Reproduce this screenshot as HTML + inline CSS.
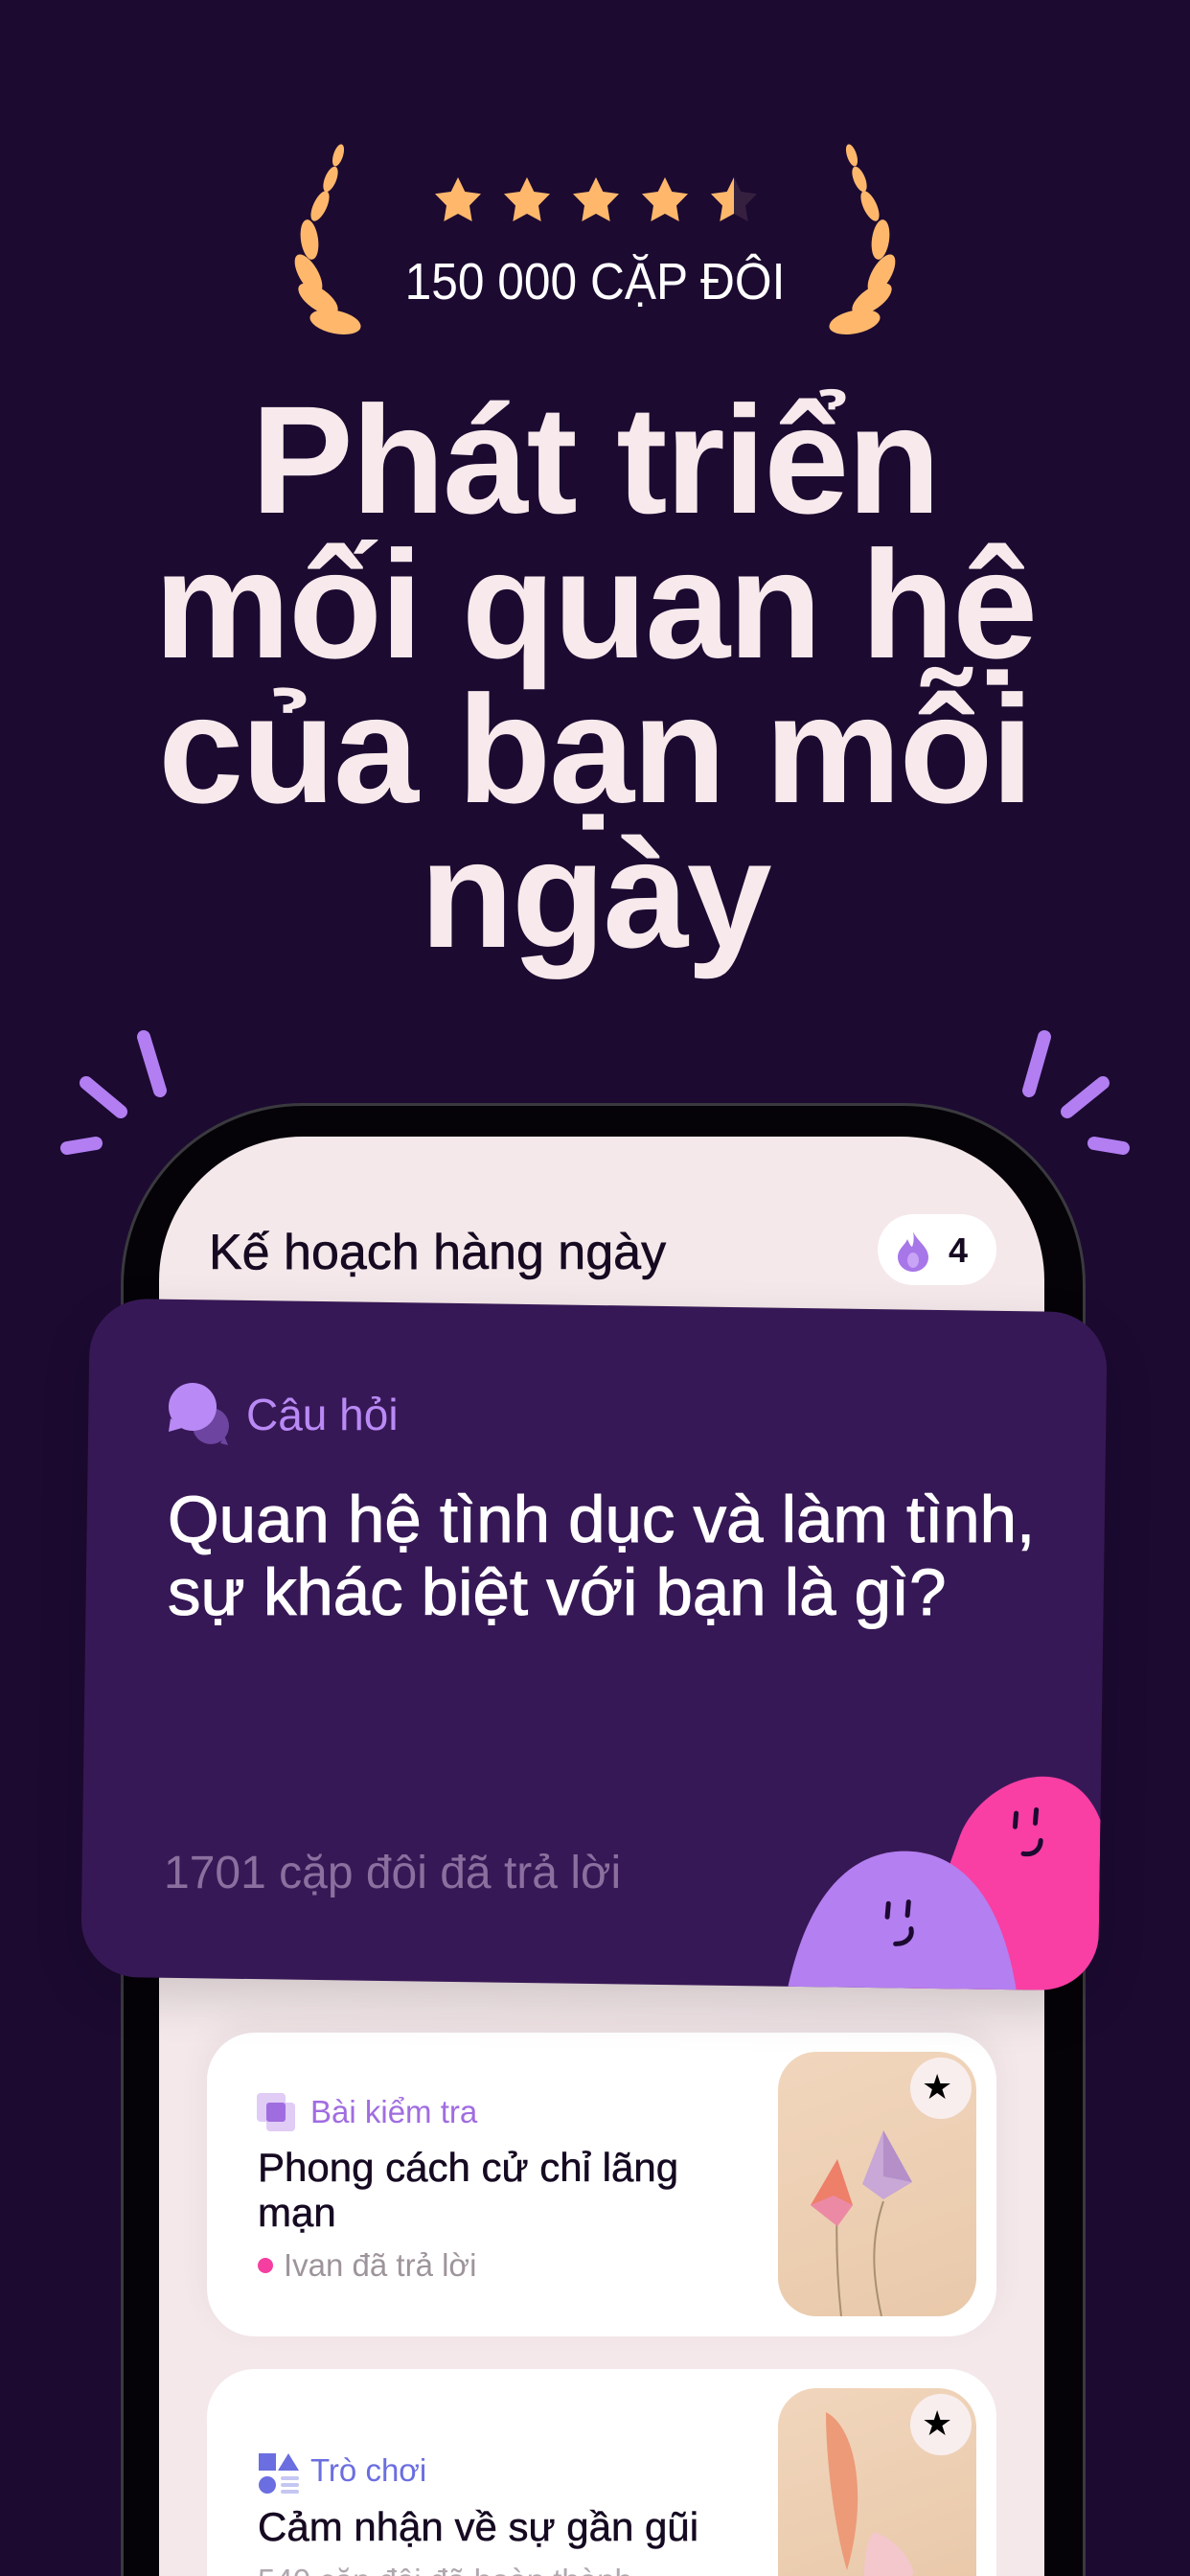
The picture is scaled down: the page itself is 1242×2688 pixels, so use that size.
<!DOCTYPE html>
<html><head><meta charset="utf-8">
<style>
*{margin:0;padding:0;box-sizing:border-box}
html,body{width:1242px;height:2688px;overflow:hidden;background:#1c0a31}
body{font-family:"Liberation Sans",sans-serif}
#w{position:relative;width:1242px;height:2688px;overflow:hidden;background:#1c0a31}
.a{position:absolute;white-space:nowrap}
</style></head><body><div id="w">

<svg class="a" style="left:0;top:0" width="1242" height="420">
<g id="lau" fill="#ffb86b">
<ellipse cx="353" cy="162" rx="5" ry="12" transform="rotate(18 353 162)"/>
<ellipse cx="345" cy="187" rx="6" ry="14" transform="rotate(22 345 187)"/>
<ellipse cx="334" cy="215" rx="7" ry="17" transform="rotate(25 334 215)"/>
<ellipse cx="323" cy="250" rx="9" ry="21" transform="rotate(-8 323 250)"/>
<ellipse cx="322" cy="286" rx="10" ry="23" transform="rotate(-30 322 286)"/>
<ellipse cx="332" cy="312" rx="11" ry="24" transform="rotate(-55 332 312)"/>
<ellipse cx="350" cy="336" rx="12" ry="27" transform="rotate(-78 350 336)"/>
</g>
<use href="#lau" transform="translate(1242 0) scale(-1 1)"/>
<g fill="#ffb86b">
<polygon id="st" points="0,-25 7.3,-10 24,-7.7 12,4.5 14.7,21 0,13 -14.7,21 -12,4.5 -24,-7.7 -7.3,-10" transform="translate(478 210)"/>
<use href="#st" x="72"/><use href="#st" x="144"/><use href="#st" x="216"/>
</g>
<polygon points="0,-25 7.3,-10 24,-7.7 12,4.5 14.7,21 0,13 -14.7,21 -12,4.5 -24,-7.7 -7.3,-10" transform="translate(766 210)" fill="#35203f"/>
<polygon points="0,-25 0,13 -14.7,21 -12,4.5 -24,-7.7 -7.3,-10" transform="translate(766 210)" fill="#ffb86b"/>
</svg>
<div class="a" style="left:0;width:1242px;top:264px;text-align:center;font-size:54px;line-height:60px;color:#fff;transform:scaleX(0.92)">150 000 CẶP ĐÔI</div>

<div class="a" style="left:0;width:1242px;top:404px;text-align:center;font-size:160px;line-height:151px;font-weight:bold;color:#f8e9ec;letter-spacing:-2px;white-space:normal">Phát triển<br>mối quan hệ<br>của bạn mỗi<br>ngày</div>

<svg class="a" style="left:0;top:1060px" width="1242" height="160">
<g stroke="#b27ef2" stroke-width="14" stroke-linecap="round">
<line x1="150" y1="22" x2="167" y2="78"/><line x1="90" y1="70" x2="126" y2="100"/><line x1="70" y1="138" x2="100" y2="133"/>
<line x1="1090" y1="22" x2="1074" y2="78"/><line x1="1151" y1="70" x2="1114" y2="100"/><line x1="1172" y1="138" x2="1142" y2="133"/>
</g></svg>

<div class="a" style="left:126px;top:1151px;width:1007px;height:1537px;border-radius:190px 190px 0 0;background:#050308;border:3px solid #3a3a3e;border-bottom:0"></div>
<div class="a" style="left:166px;top:1186px;width:924px;height:1502px;border-radius:150px 150px 0 0;background:#f4e8ea"></div>
<div class="a" style="left:218px;top:1279px;font-size:52px;line-height:56px;color:#160a22;-webkit-text-stroke:0.6px #160a22">Kế hoạch hàng ngày</div>
<div class="a" style="left:916px;top:1267px;width:124px;height:74px;border-radius:37px;background:#fff"></div>
<svg class="a" style="left:935px;top:1283px" width="36" height="44"><path d="M18 2 C22 12 34 18 34 29 A16 15 0 0 1 2 29 C2 20 10 16 12 10 C14 14 15 17 17 18 C19 13 19 8 18 2Z" fill="#a776e8"/><ellipse cx="18" cy="32" rx="6" ry="8" fill="#c9a3f5"/></svg>
<div class="a" style="left:990px;top:1285px;font-size:36px;line-height:40px;color:#160a22;font-weight:bold">4</div>

<div class="a" style="left:216px;top:2121px;width:824px;height:317px;border-radius:50px;background:#fff;box-shadow:0 -10px 30px rgba(120,90,110,0.08)"></div>
<div class="a" style="left:812px;top:2141px;width:207px;height:276px;border-radius:40px;background:linear-gradient(160deg,#f1d6bd,#e9c9aa)"></div>
<svg class="a" style="left:812px;top:2141px" width="207" height="276">
<path d="M110 156 C95 200 100 240 108 276" stroke="#a89070" stroke-width="2" fill="none"/>
<path d="M62 150 C60 200 62 240 66 276" stroke="#a89070" stroke-width="2" fill="none"/>
<polygon points="110,82 88,138 110,154 140,136" fill="#c9a7d6"/><polygon points="110,82 140,136 110,130" fill="#b48fc8"/>
<polygon points="62,112 34,160 62,182 78,160" fill="#ee7f69"/><polygon points="34,160 62,182 78,160 58,150" fill="#ec8aa6"/>
</svg>
<div class="a" style="left:950px;top:2147px;width:64px;height:64px;border-radius:32px;background:#f8eeee"></div>
<div class="a" style="left:962px;top:2158px;font-size:36px;line-height:40px;color:#000">★</div>
<svg class="a" style="left:268px;top:2184px" width="40" height="40"><rect x="0" y="0" width="30" height="30" rx="4" fill="#e0ccf5"/><rect x="10" y="10" width="30" height="30" rx="4" fill="#e0ccf5"/><rect x="10" y="10" width="20" height="20" rx="3" fill="#a06de0"/></svg>
<div class="a" style="left:324px;top:2185px;font-size:33px;line-height:38px;color:#a06de0">Bài kiểm tra</div>
<div class="a" style="left:269px;top:2238px;font-size:42px;line-height:47px;color:#160a22;-webkit-text-stroke:0.5px #160a22">Phong cách cử chỉ lãng<br>mạn</div>
<div class="a" style="left:269px;top:2356px;width:16px;height:16px;border-radius:8px;background:#f43fa0"></div>
<div class="a" style="left:296px;top:2345px;font-size:33px;line-height:38px;color:#9e959c">Ivan đã trả lời</div>

<div class="a" style="left:216px;top:2472px;width:824px;height:216px;border-radius:50px 50px 0 0;background:#fff"></div>
<div class="a" style="left:812px;top:2492px;width:207px;height:196px;border-radius:40px 40px 0 0;background:linear-gradient(160deg,#f1d6bd,#e9c9aa)"></div>
<svg class="a" style="left:812px;top:2492px" width="207" height="196"><path d="M50 25 C80 40 95 110 72 190 C60 150 50 80 50 25Z" fill="#ec9a78"/><path d="M100 150 C130 160 145 190 140 196 L90 196 C90 180 92 160 100 150Z" fill="#f3c7cc"/></svg>
<div class="a" style="left:950px;top:2498px;width:64px;height:64px;border-radius:32px;background:#f8eeee"></div>
<div class="a" style="left:962px;top:2509px;font-size:36px;line-height:40px;color:#000">★</div>
<svg class="a" style="left:270px;top:2560px" width="44" height="44"><rect x="0" y="0" width="18" height="18" fill="#6b6ee0"/><polygon points="31,0 42,18 20,18" fill="#6b6ee0"/><circle cx="9" cy="33" r="9" fill="#6b6ee0"/><rect x="23" y="24" width="19" height="4" rx="2" fill="#c5c6f2"/><rect x="23" y="31" width="19" height="4" rx="2" fill="#c5c6f2"/><rect x="23" y="38" width="19" height="4" rx="2" fill="#c5c6f2"/></svg>
<div class="a" style="left:324px;top:2559px;font-size:33px;line-height:38px;color:#6b6ee0">Trò chơi</div>
<div class="a" style="left:269px;top:2613px;font-size:42px;line-height:47px;color:#160a22;-webkit-text-stroke:0.5px #160a22">Cảm nhận về sự gần gũi</div>
<div class="a" style="left:269px;top:2674px;height:14px;overflow:hidden"><div style="font-size:33px;line-height:38px;color:#b0a8ae">540 cặp đôi đã hoàn thành</div></div>

<div class="a" style="left:89px;top:1362px;width:1062px;height:708px;border-radius:60px;background:#371856;transform:rotate(0.8deg);overflow:hidden;box-shadow:0 20px 50px rgba(0,0,0,0.15)">
 <svg class="a" style="left:700px;top:440px" width="362" height="270">
  <path d="M160 270 L215 110 C235 50 330 10 362 90 L362 270Z" fill="#f93ea4"/>
  <path d="M38 270 C60 160 110 125 160 125 C215 125 260 170 277 270Z" fill="#b47ff0"/>
  <g stroke="#1c0a31" stroke-width="5" stroke-linecap="round" fill="none">
   <line x1="274" y1="84" x2="273" y2="98"/><line x1="295" y1="80" x2="294" y2="94"/><path d="M282 126 C294 128 300 120 300 112"/>
   <line x1="142" y1="180" x2="141" y2="194"/><line x1="163" y1="178" x2="162" y2="192"/><path d="M150 222 C162 222 168 214 166 206"/>
  </g>
 </svg>
</div>
<svg class="a" style="left:172px;top:1440px" width="72" height="70"><circle cx="48" cy="48" r="19" fill="#6d45a0"/><path d="M58 66 L66 68 L62 58Z" fill="#6d45a0"/><circle cx="29" cy="28" r="25" fill="#b98af5"/><path d="M6 40 L4 54 L18 50Z" fill="#b98af5"/></svg>
<div class="a" style="left:257px;top:1451px;font-size:46px;line-height:50px;color:#b98af5">Câu hỏi</div>
<div class="a" style="left:175px;top:1548px;font-size:69px;line-height:76px;color:#fff;-webkit-text-stroke:1px #fff">Quan hệ tình dục và làm tình,<br>sự khác biệt với bạn là gì?</div>
<div class="a" style="left:171px;top:1929px;font-size:48px;line-height:52px;color:#8b6f9e">1701 cặp đôi đã trả lời</div>

</div></body></html>
